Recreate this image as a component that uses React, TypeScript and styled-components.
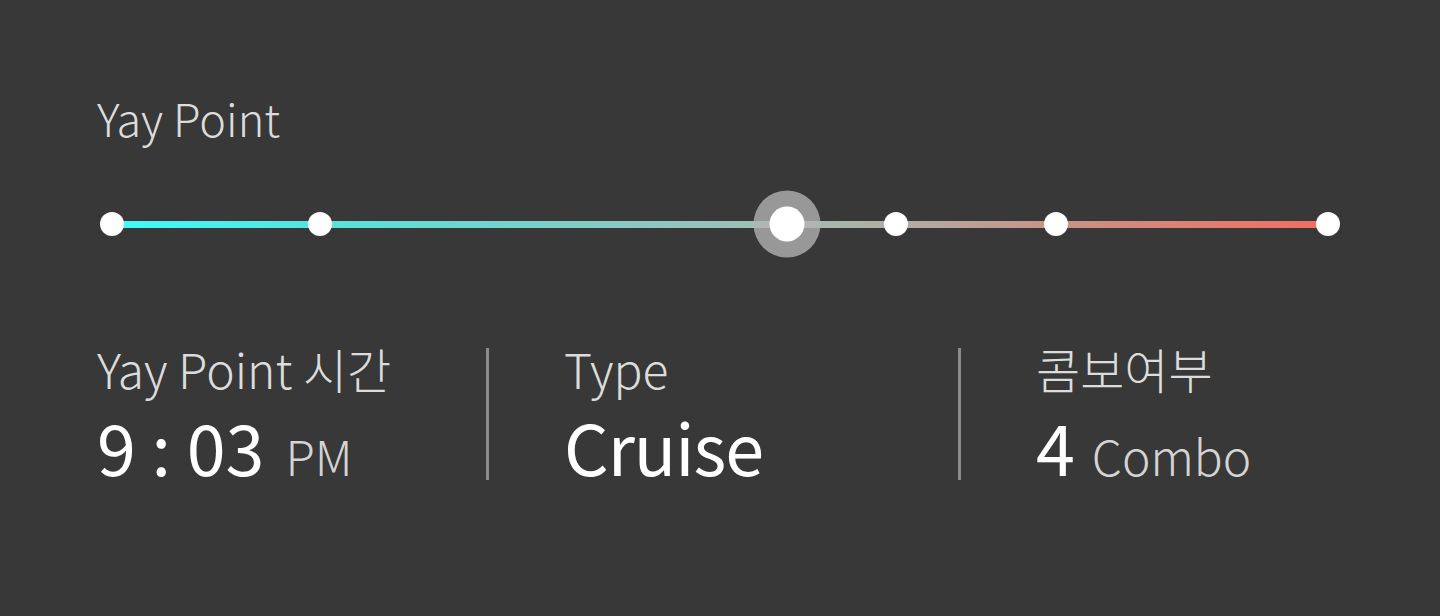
import React from "react";
import styled, { createGlobalStyle } from "styled-components";

const Global = createGlobalStyle`
  html, body { margin: 0; padding: 0; background: #383838; }
  body { font-family: "Noto Sans CJK KR", "Noto Sans", sans-serif; }
`;

const Page = styled.div`
  width: 1440px;
  height: 616px;
  box-sizing: border-box;
  padding: 95px 0 0 97px;
  background: #383838;
`;

const Title = styled.div`
  font-size: 45px;
  font-weight: 300;
  line-height: 1;
  height: 46px;
  color: #dcdcdc;
`;

const SliderArea = styled.div`
  margin: 49px 0 0 15px;
  width: 1216px;
  height: 68px;
  display: flex;
  align-items: center;
  position: relative;
`;

const Track = styled.div`
  width: 100%;
  height: 7px;
  background: linear-gradient(90deg, #3ffbfb 0%, #5ae0d8 20%, #a4bdb4 55%, #b6a69c 68%, #d08b80 82%, #f36d60 100%);
`;

const Dot = styled.div<{ $big?: boolean }>`
  position: absolute;
  top: 50%;
  transform: translate(-50%, -50%);
  width: ${(p) => (p.$big ? 35 : 24)}px;
  height: ${(p) => (p.$big ? 35 : 24)}px;
  border-radius: 50%;
  background: #ffffff;
  ${(p) => (p.$big ? "box-shadow: 0 0 0 16px rgba(180,180,180,0.78);" : "")}
`;

const Stats = styled.div`
  display: flex;
  margin-top: 90px;
  height: 132px;
`;

const Column = styled.div<{ $first?: boolean; $w: number }>`
  width: ${(p) => p.$w}px;
  box-sizing: border-box;
  ${(p) =>
    p.$first
      ? ""
      : "border-left: 3px solid #8c8c8c; padding-left: 75px;"}
  display: flex;
  flex-direction: column;
`;

const Label = styled.div`
  font-size: 48px;
  font-weight: 300;
  line-height: 1;
  color: #dcdcdc;
  margin-top: -4px;
`;

const Value = styled.div<{ $tight?: boolean }>`
  margin-top: 19px;
  font-size: 70px;
  font-weight: 400;
  line-height: 1;
  color: #ffffff;
  display: flex;
  align-items: baseline;
  white-space: pre;
  ${(p) => (p.$tight ? "letter-spacing: -1px;" : "")}
`;

const Unit = styled.span<{ $gap: number }>`
  font-size: 48px;
  font-weight: 300;
  color: #d4d4d4;
  letter-spacing: 0;
  margin-left: ${(p) => p.$gap}px;
`;

const dots = [0, 17.105, 64.474, 77.632, 100];

export default function App() {
  return (
    <>
      <Global />
      <Page>
        <Title>Yay Point</Title>
        <SliderArea>
          <Track />
          {dots.map((d) => (
            <Dot key={d} style={{ left: `${d}%` }} />
          ))}
          <Dot $big style={{ left: "55.51%" }} />
        </SliderArea>
        <Stats>
          <Column $first $w={389}>
            <Label>Yay Point 시간</Label>
            <Value>
              9 : 03<Unit $gap={21}>PM</Unit>
            </Value>
          </Column>
          <Column $w={472}>
            <Label>Type</Label>
            <Value $tight>Cruise</Value>
          </Column>
          <Column $w={400}>
            <Label>콤보여부</Label>
            <Value>
              4<Unit $gap={17}>Combo</Unit>
            </Value>
          </Column>
        </Stats>
      </Page>
    </>
  );
}
